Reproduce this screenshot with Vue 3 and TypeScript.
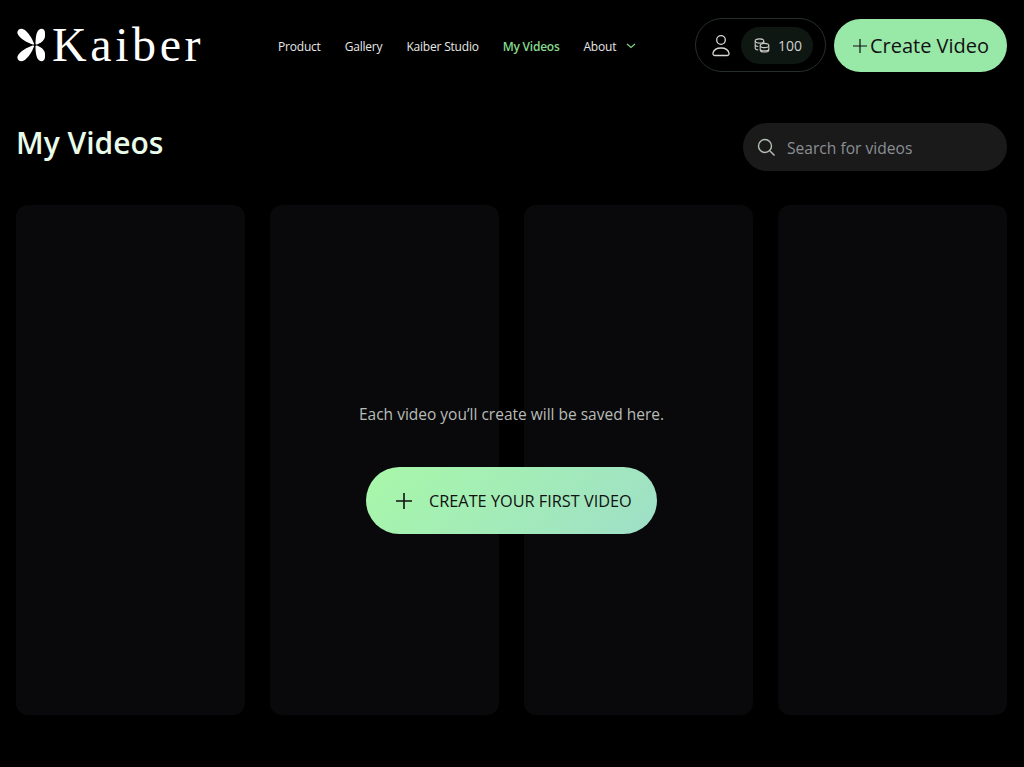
<template>
  <div class="page">
    <header class="topbar">
      <a class="brand" href="#">
        <svg class="brand-mark" width="30" height="34" viewBox="0 0 30 34" fill="#fff">
          <g>
            <path d="M1.500 5.500C.5 1.500 5-.5 8 1.500 12 4 16 10 18 15.500c.2 1-.3 1.300-1.300 1C12 15 3 10.500 1.500 5.500Z" />
            <path d="M29 5c0-4-3.500-5.500-6.300-3C20 4.500 19.500 11 19.500 15.500c0 1 .5 1.300 1.500 1 4-1.500 8-4.500 8-8.500Z" />
          </g>
          <g transform="matrix(1 0 0 -1 0 34)">
            <path d="M1.500 5.500C.5 1.500 5-.5 8 1.500 12 4 16 10 18 15.500c.2 1-.3 1.300-1.300 1C12 15 3 10.500 1.500 5.500Z" />
            <path d="M29 5c0-4-3.500-5.500-6.300-3C20 4.500 19.500 11 19.500 15.500c0 1 .5 1.300 1.500 1 4-1.500 8-4.500 8-8.500Z" />
          </g>
        </svg>
        <span class="brand-name">Kaiber</span>
      </a>

      <nav class="nav">
        <a
          v-for="link in navLinks"
          :key="link.label"
          class="nav-link"
          :class="{ active: link.active }"
          href="#"
        >{{ link.label }}</a>
        <a class="nav-link about" href="#">
          About
          <svg width="10" height="6" viewBox="0 0 10 6" fill="none" stroke="#7fd48a" stroke-width="1.2">
            <path d="M1 1l4 3.500L9 1" />
          </svg>
        </a>
      </nav>

      <div class="account">
        <svg width="18" height="23" viewBox="0 0 18 23" fill="none" stroke="#d8d8d4" stroke-width="1.3">
          <circle cx="9" cy="6" r="4.300" />
          <path d="M3 21.500h12c1.400 0 2.300-.9 2-2.300-.6-3-3.800-5.200-8-5.200s-7.400 2.200-8 5.200c-.3 1.400.6 2.300 2 2.300Z" />
        </svg>
        <div class="credits">
          <svg width="16" height="15" viewBox="0 0 16 15" fill="none" stroke="#c8c8c4" stroke-width="1.100">
            <ellipse cx="5.500" cy="3" rx="4.300" ry="2.100" />
            <path d="M1.200 3v7c0 1 1 1.700 3 2M9.800 3v2.500M1.200 6.500c0 1 1 1.700 3 2" />
            <ellipse cx="10.500" cy="7.500" rx="4.300" ry="2.100" />
            <path d="M6.200 7.500v4.400c0 1.200 1.900 2.100 4.300 2.100s4.300-.9 4.300-2.100V7.500M6.200 10.700c0 1.200 1.900 2.100 4.300 2.100s4.300-.9 4.300-2.100" />
          </svg>
          <span>100</span>
        </div>
      </div>

      <button class="create-btn" type="button">
        <svg width="16" height="16" viewBox="0 0 16 16" stroke="#111" stroke-width="1.200">
          <path d="M8 1v14M1 8h14" />
        </svg>
        Create Video
      </button>
    </header>

    <section class="title-row">
      <h1>My Videos</h1>
      <div class="search">
        <svg width="19" height="19" viewBox="0 0 19 19" fill="none" stroke="#b4c0b4" stroke-width="1.400">
          <circle cx="8" cy="8" r="6.500" />
          <path d="M13 13l4.500 4.500" />
        </svg>
        <input type="text" placeholder="Search for videos" />
      </div>
    </section>

    <main class="gallery">
      <div v-for="n in 4" :key="n" class="placeholder"></div>

      <div class="empty">
        <p>Each video you’ll create will be saved here.</p>
        <button class="first-btn" type="button">
          <svg width="18" height="18" viewBox="0 0 18 18" stroke="#111" stroke-width="1.600">
            <path d="M9 1v16M1 9h16" />
          </svg>
          CREATE YOUR FIRST VIDEO
        </button>
      </div>
    </main>
  </div>
</template>

<script setup lang="ts">
interface NavLink {
  label: string;
  active?: boolean;
}

const navLinks: NavLink[] = [
  { label: 'Product' },
  { label: 'Gallery' },
  { label: 'Kaiber Studio' },
  { label: 'My Videos', active: true },
];
</script>

<style>
html,
body {
  margin: 0;
  background: #000;
}
</style>

<style scoped>
.page {
  height: 767px;
  overflow: hidden;
  background: #000;
  font-family: "Open Sans", "Noto Sans", sans-serif;
  box-sizing: border-box;
  padding: 18px 17px 0 16px;
}

.topbar {
  display: flex;
  align-items: center;
  height: 54px;
}

.brand {
  display: flex;
  align-items: center;
  gap: 6px;
  width: 262px;
  color: #fff;
  text-decoration: none;
}

.brand-name {
  font-family: "Liberation Serif", serif;
  font-size: 48px;
  line-height: 46px;
  letter-spacing: 3.600px;
}

.nav {
  display: flex;
  align-items: center;
  gap: 24px;
  flex: 1;
  padding-top: 2px;
}

.nav-link {
  font-size: 12px;
  font-weight: 500;
  letter-spacing: -0.2px;
  color: #e8e8e8;
  text-decoration: none;
}

.nav-link.active {
  font-weight: 600;
  letter-spacing: -0.25px;
  color: #86d98f;
}

.about {
  display: flex;
  align-items: center;
  gap: 10px;
}

.account {
  display: flex;
  align-items: center;
  box-sizing: border-box;
  width: 131px;
  height: 54px;
  padding: 0 12px 0 16px;
  justify-content: space-between;
  border: 1px solid #26302a;
  border-radius: 27px;
}

.credits {
  display: flex;
  align-items: center;
  gap: 8px;
  box-sizing: border-box;
  width: 72px;
  height: 37px;
  padding-left: 13px;
  border-radius: 19px;
  background: #0f1713;
  color: #d0d0cc;
  font-size: 14px;
}

.create-btn {
  display: flex;
  align-items: center;
  justify-content: center;
  gap: 2px;
  width: 173px;
  height: 53px;
  margin: 1px 0 0 8px;
  border: 0;
  border-radius: 27px;
  background: #98e9a8;
  color: #111;
  font-family: inherit;
  font-size: 20px;
}

.title-row {
  display: flex;
  align-items: center;
  justify-content: space-between;
  height: 48px;
  margin-top: 51px;
}

h1 {
  margin: -10px 0 0;
  font-size: 30px;
  font-weight: 600;
  color: #e9fbe9;
}

.search {
  display: flex;
  align-items: center;
  gap: 11px;
  box-sizing: border-box;
  width: 264px;
  height: 48px;
  padding: 1px 0 0 14px;
  border-radius: 24px;
  background: #1a1a1a;
}

.search input {
  flex: 1;
  min-width: 0;
  padding: 1px 0 0;
  border: 0;
  outline: 0;
  background: transparent;
  font-family: inherit;
  font-size: 15.600px;
  color: #fff;
}

.search input::placeholder {
  color: #8b8f96;
  opacity: 1;
}

.gallery {
  position: relative;
  display: grid;
  grid-template-columns: repeat(4, 1fr);
  gap: 25px;
  height: 510px;
  margin-top: 34px;
}

.placeholder {
  border-radius: 12px;
  background: #09090b;
}

.empty {
  position: absolute;
  left: 0;
  right: 0;
  top: 197px;
  display: flex;
  flex-direction: column;
  align-items: center;
  gap: 41px;
}

.empty p {
  margin: 0;
  font-size: 15.500px;
  line-height: 24px;
  color: #b8bcb8;
}

.first-btn {
  display: flex;
  align-items: center;
  gap: 16px;
  box-sizing: border-box;
  width: 291px;
  height: 67px;
  padding-left: 29px;
  border: 0;
  border-radius: 34px;
  background: linear-gradient(135deg, #a8f8a8, #9edfc8);
  color: #111;
  font-family: inherit;
  font-size: 16.300px;
  font-weight: 500;
  white-space: nowrap;
}
</style>
